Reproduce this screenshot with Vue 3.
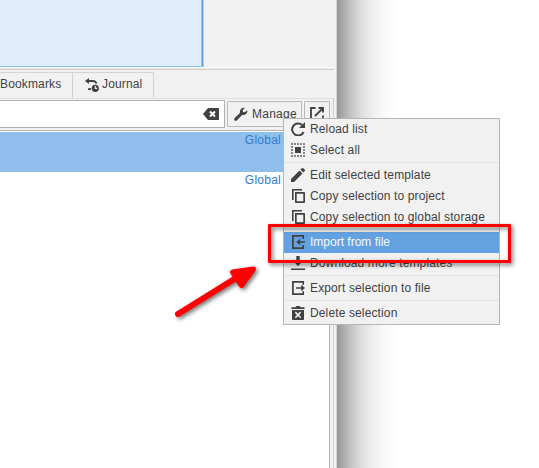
<script setup>
const groups = [
  [
    { icon: 'reload', label: 'Reload list' },
    { icon: 'select', label: 'Select all' },
  ],
  [
    { icon: 'edit', label: 'Edit selected template' },
    { icon: 'copy', label: 'Copy selection to project' },
    { icon: 'copy', label: 'Copy selection to global storage' },
  ],
  [
    { icon: 'import', label: 'Import from file', active: true },
    { icon: 'download', label: 'Download more templates' },
  ],
  [{ icon: 'export', label: 'Export selection to file' }],
  [{ icon: 'delete', label: 'Delete selection' }],
]
const icons = {
  reload: '<path d="M12.6 10A6 6 0 1 1 11.2 3" fill="none" stroke="currentColor" stroke-width="2"/><path d="M14 0v6H8z"/>',
  select: '<path d="M4 4h6v6H4z"/><path d="M.2 1h14M.2 13h14" fill="none" stroke="currentColor" stroke-width="1.6" stroke-dasharray="1.6 1.4"/><path d="M1 3.200v8.500M13 3.200v8.500" fill="none" stroke="currentColor" stroke-width="1.6" stroke-dasharray="1.6 1.4"/>',
  edit: '<path d="M0 14v-3L8.5 2.5l3 3L3 14zM9.4 1.6 11 .2q.6-.5 1.2 0L13.8 1.8q.5.6 0 1.2L12.4 4.6z"/>',
  copy: '<path d="M1 0H11V1.6H2.600V11H1z"/><path fill-rule="evenodd" d="M4 3h9.200q.8 0 .8.8v9.400q0 .8-.8.8H4.800Q4 14 4 13.200zM5.700 4.700V12.300H12.300V4.700z"/>',
  import: '<path d="M12.200 4V.9H1.900v12.200h10.300V10" fill="none" stroke="currentColor" stroke-width="1.700"/><path d="m5.200 7 4-3.300v2.500H14v1.600H9.200v2.500z"/>',
  export: '<path d="M12.200 3.800V.9H1.900v12.200h10.300v-2.900" fill="none" stroke="currentColor" stroke-width="1.700"/><path d="m14 7-3.800-3.300v2.500H5v1.600h5.200v2.500z"/>',
  download: '<path d="M5.3 0h3.4v5H12L7 10 2 5h3.3zM0 12.500h14V14H0z"/>',
  delete: '<path d="M.5 1.300h4L5.500 0h3l1 1.300h4V3H.5z"/><path fill-rule="evenodd" d="M1 4h12v9.200q0 .8-.8.8H1.800Q1 14 1 13.200zM3.800 6.500 5.900 8.900 3.800 11.200 4.900 12.300 7 10 9.100 12.300l1.100-1.100L8.100 8.900l2.100-2.400L9.100 5.400 7 7.700 4.900 5.400z"/>',
}
</script>

<template>
  <main class="screen">
    <section class="window">
      <div class="preview"></div>
      <nav class="tabs">
        <div class="tab bookmarks">Bookmarks</div>
        <div class="tab journal">
          <svg width="14" height="14" viewBox="0 0 14 14" fill="currentColor">
            <path d="M0 3 4 0v2h4q3 0 4.300 3.300L10.800 6Q10.300 4 8 4H4v2zM3 10.300h3V12H3z" />
            <circle cx="10.300" cy="10.300" r="3.600" />
            <path d="M10.300 8v2.400h2" fill="none" stroke="#f1f1f1" stroke-width="1.100" />
          </svg>
          <span>Journal</span>
        </div>
      </nav>
      <div class="panel">
        <div class="toolbar">
          <div class="search">
            <svg width="16" height="12" viewBox="0 0 16 12">
              <path d="M5 0h10.200q.8 0 .8.8v10.400q0 .8-.8.8H5L0 6z" fill="#414141" />
              <path d="m7 3.500 5 5m0-5-5 5" stroke="#fff" stroke-width="2" />
            </svg>
          </div>
          <button class="manage">
            <svg width="14" height="14" viewBox="0 0 14 14" fill="currentColor">
              <path d="M.5 11.300 6 6.100C5.300 3 7.700.1 10.900.9L8.700 3.100l.3 1.900 1.900.3 2.300-2.100c.8 3.100-2 5.500-5.100 4.800L2.800 13.400c-1.300 1.400-3.500-.7-2.300-2.100z" />
            </svg>
            <span>Manage</span>
          </button>
          <button class="open">
            <svg width="14" height="14" viewBox="0 0 14 14" fill="none" stroke="currentColor" stroke-width="1.800">
              <path d="M5.500 1H1v12h12V8.500M8.500 1H13v4.500M12.700 1.300 5 9" />
            </svg>
          </button>
        </div>
        <div class="list">
          <div class="row selected">Global</div>
          <div class="row">Global</div>
        </div>
      </div>
    </section>
    <div class="shade"></div>

    <div class="menu">
      <div v-for="(group, g) in groups" :key="g" class="group">
        <div v-for="item in group" :key="item.label" class="item" :class="{ active: item.active }">
          <svg width="14" height="14" viewBox="0 0 14 14" fill="currentColor" v-html="icons[item.icon]"></svg>
          <span>{{ item.label }}</span>
        </div>
      </div>
    </div>

    <div class="marker"></div>
    <svg class="arrow" width="100" height="70" viewBox="0 0 100 70">
      <path d="M13 54 75 15.500" stroke="#f00" stroke-width="6" stroke-linecap="round" />
      <path d="M67.500 12 88.500 9 76.500 25.500z" fill="#f00" stroke="#f00" stroke-width="5" stroke-linejoin="round" />
    </svg>
  </main>
</template>

<style>
body {
  margin: 0;
  overflow: hidden;
}
</style>

<style scoped>
.screen {
  position: relative;
  display: flex;
  width: 539px;
  height: 468px;
  overflow: hidden;
  background: #fff;
  color: #414141;
  font: 12px/14px "Liberation Sans", Arial, sans-serif;
}
.screen * {
  box-sizing: border-box;
}
.window {
  display: flex;
  flex-direction: column;
  width: 337px;
  background: #f1f1f1;
  border-right: 1px solid #d8d8d8;
}
.preview {
  width: 204px;
  height: 67px;
  flex: none;
  background: #dfedfa;
  border-right: 1px solid #a9cdf2;
  border-bottom: 1px solid #8fbfed;
  box-shadow: inset -1px 0 #5f9fdf, inset -2px 0 #a0c5ec;
}
.tabs {
  display: flex;
  width: 334px;
  height: 31px;
  flex: none;
  padding-top: 2px;
  border-top: 1px solid #fff;
  box-shadow: inset 0 1px #e8e8e8, inset 0 2px #d0d0d0;
}
.tab {
  display: flex;
  margin-top: 2px;
  height: 26px;
  padding-top: 4px;
  border-top: 1px solid #d5d5d5;
  border-right: 1px solid #d0d0d0;
  letter-spacing: 0.15px;
}
.bookmarks {
  width: 73px;
}
.journal {
  width: 81px;
  padding-left: 12px;
  gap: 3px;
}
.journal svg {
  margin-top: 1px;
}
.panel {
  width: 334px;
  flex: 1;
  display: flex;
  flex-direction: column;
  border-top: 1px solid #dedede;
  border-right: 1px solid #d0d0d0;
}
.toolbar {
  display: flex;
  padding-top: 1px;
  height: 31px;
  flex: none;
}
.search {
  width: 225px;
  height: 28px;
  display: flex;
  align-items: center;
  justify-content: flex-end;
  padding-right: 5px;
  background: #fff;
  border: solid #b0b0b0;
  border-width: 1px 1px 1px 0;
}
button {
  display: flex;
  align-items: center;
  margin: 1px 0 0 2px;
  height: 26px;
  border: 1px solid #b9b9b9;
  border-radius: 1px;
  background: #f1f1f1;
  color: inherit;
  font: inherit;
}
.manage {
  width: 75px;
  padding: 0 0 0 6px;
  gap: 4px;
}
.manage span {
  letter-spacing: 0.25px;
}
.open {
  width: 26px;
  padding: 0 0 0 5px;
}
.list {
  width: 330px;
  flex: 1;
  background: #fff;
  border-top: 1px solid #b5b5b5;
  border-right: 1px solid #b5b5b5;
  padding-top: 1px;
}
.row {
  height: 40px;
  padding: 1px 48px 0 0;
  text-align: right;
  color: #2e7dcb;
  letter-spacing: 0.25px;
}
.selected {
  background: #90bfee;
}
.shade {
  width: 70px;
  background: linear-gradient(90deg, #969696 0, #a9a9a9 8%, #c2c2c2 19%, #dcdcdc 34%, #eee 50%, #f9f9f9 66%, #fff 90%);
}
.menu {
  position: absolute;
  left: 283px;
  top: 118px;
  width: 217px;
  border: 1px solid #b5b6ba;
  background: #f1f1f1;
}
.group + .group {
  margin-top: 1px;
  border-top: 1px solid #e2e2e2;
  padding-top: 2px;
}
.item {
  display: flex;
  height: 21px;
  padding: 3px 0 0 7px;
  gap: 5px;
  white-space: nowrap;
}
.item svg {
  flex: none;
}
.item span {
  letter-spacing: 0.13px;
}
.active {
  background: #64a1e0;
}
.active span {
  color: #f4f8fd;
  letter-spacing: 0;
}
.marker {
  position: absolute;
  left: 268px;
  top: 224px;
  width: 243px;
  height: 39px;
  border: 3px solid #f00;
  border-radius: 1px;
  filter: drop-shadow(2px 2px 2px rgba(0, 0, 0, 0.55));
}
.arrow {
  position: absolute;
  left: 165px;
  top: 260px;
  filter: drop-shadow(2px 2px 2px rgba(0, 0, 0, 0.55));
}
</style>
